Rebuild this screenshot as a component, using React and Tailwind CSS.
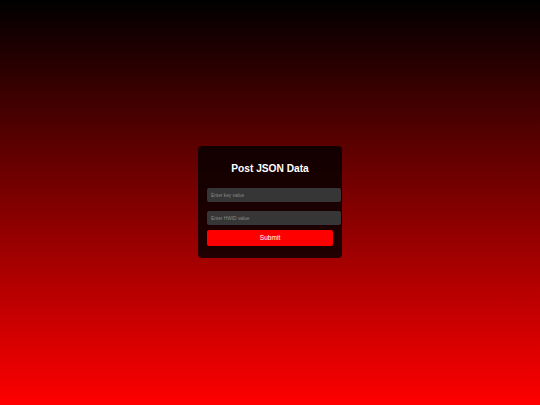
import React, { useState } from 'react';

const PostJsonForm = () => {
    const [key, setKey] = useState('');
    const [hwid, setHwid] = useState('');

    const handleSubmit = (e) => {
        e.preventDefault();
        // payload is built here; sending is left to the caller
        console.log(JSON.stringify({ key, hwid }));
    };

    return (
        <form
            onSubmit={handleSubmit}
            className="w-[144px] rounded-[4px] bg-black/80 px-[9px] pt-[9px] pb-[12px] flex flex-col"
        >
            <h2 className="mt-[8px] h-[12px] text-center text-[10.2px] leading-[12px] font-bold text-white">
                Post JSON Data
            </h2>
            <input
                type="text"
                value={key}
                onChange={(e) => setKey(e.target.value)}
                placeholder="Enter key value"
                className="mt-[13px] w-[134px] h-[14px] px-[4px] rounded-[2px] bg-[#363636] text-[4.8px] text-white placeholder:text-[#8a8a8a] outline-none"
            />
            <input
                type="text"
                value={hwid}
                onChange={(e) => setHwid(e.target.value)}
                placeholder="Enter HWID value"
                className="mt-[9px] w-[134px] h-[14px] px-[4px] rounded-[2px] bg-[#363636] text-[4.8px] text-white placeholder:text-[#8a8a8a] outline-none"
            />
            <button
                type="submit"
                className="mt-[5px] w-full h-[16px] rounded-[2px] bg-[#ff0000] text-[6.6px] leading-[16px] text-white"
            >
                Submit
            </button>
        </form>
    );
};

export default function App() {
    return (
        <div
            className="min-h-screen w-full flex items-center justify-center pb-[1px] bg-[linear-gradient(to_bottom,#000000,#ff0000)]"
            style={{ fontFamily: '"Liberation Sans", Arial, sans-serif' }}
        >
            <PostJsonForm />
        </div>
    );
}
